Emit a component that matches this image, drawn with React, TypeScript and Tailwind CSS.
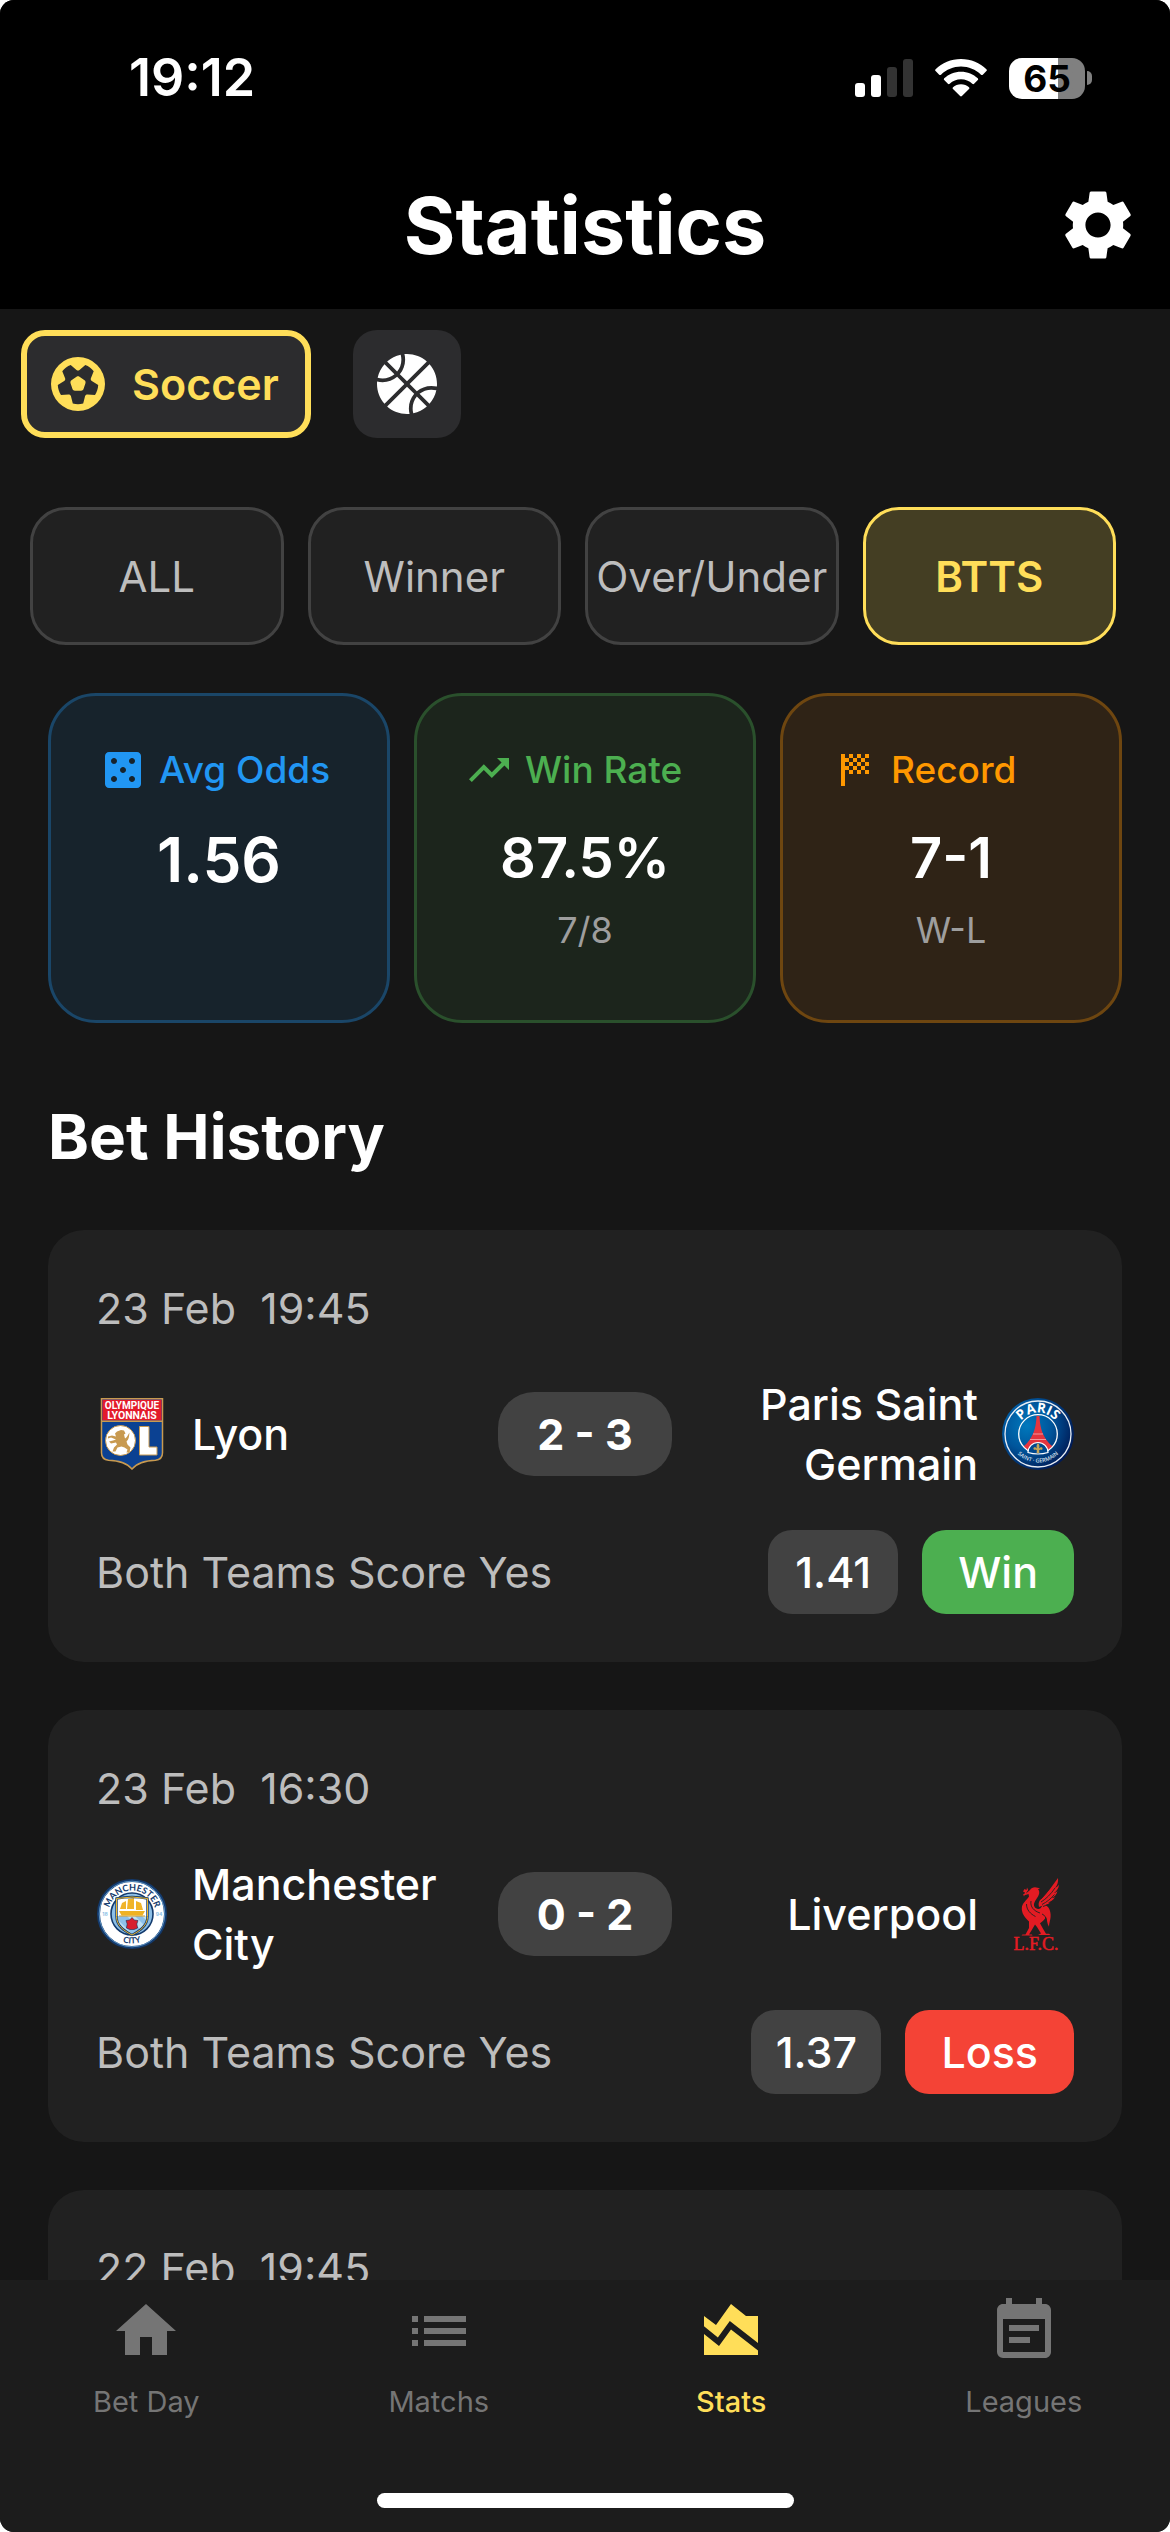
import type { ReactNode } from "react";
import {
  MdAreaChart,
  MdCasino,
  MdEventNote,
  MdHome,
  MdList,
  MdSettings,
  MdSportsScore,
  MdTrendingUp,
} from "react-icons/md";
import { FaBasketball, FaFutbol } from "react-icons/fa6";

function SignalIcon() {
  return (
    <svg viewBox="0 0 58 38" className="h-[38px] w-[58px]" aria-hidden="true">
      <rect x="0" y="24" width="10" height="14" rx="3" fill="#fff" />
      <rect x="16" y="16" width="10" height="22" rx="3" fill="#fff" />
      <rect x="32" y="8" width="10" height="30" rx="3" fill="#333" />
      <rect x="48" y="0" width="10" height="38" rx="3" fill="#333" />
    </svg>
  );
}

function WifiIcon() {
  return (
    <svg viewBox="0 0 52 38" className="h-[38px] w-[52px]" aria-hidden="true" fill="#fff">
      <path d="M26 0C36 0 45 4 51.4 10.300q.9.9 0 1.800l-3.600 3.600q-.9.8-1.800 0C40.600 10.600 33.600 7.600 26 7.600S11.400 10.600 6 15.700q-.9.800-1.800 0L.6 12.100q-.9-.9 0-1.800C7 4 16 0 26 0z" />
      <path d="M26 12.700c6.500 0 12.400 2.500 16.800 6.600q.9.900 0 1.800l-3.700 3.700q-.9.800-1.800 0C34.300 22 30.300 20.300 26 20.300S17.700 22 14.700 24.800q-.9.800-1.800 0l-3.700-3.700q-.9-.9 0-1.800C13.600 15.200 19.500 12.700 26 12.700z" />
      <path d="M26 25.200c3.100 0 5.900 1.100 8 3q1 .9 0 1.800l-7.100 7.100q-.9.900-1.800 0L18 30q-1-.9 0-1.800c2.100-1.900 4.900-3 8-3z" />
    </svg>
  );
}

function Battery() {
  return (
    <div className="flex items-center gap-[2px]" aria-label="Battery 65 percent">
      <div className="flex h-[41px] w-[76px] items-center justify-center rounded-[13px] bg-linear-to-r from-white from-65% to-[#808080] to-65% text-[37px] leading-none font-bold text-black">
        65
      </div>
      <div className="h-[14px] w-[5px] rounded-r-full bg-[#808080]" />
    </div>
  );
}

function LyonLogo() {
  return (
    <svg viewBox="0 0 72 72" className="size-[72px] shrink-0" role="img" aria-label="Lyon">
      <path d="M5.500.8h61v54c0 5-2.500 7-7 7.400C50 62.600 42 64 36 71 30 64 22 62.600 12.500 62.200c-4.500-.4-7-2.400-7-7.400z" fill="#0b4192" stroke="#c89a50" strokeWidth="1.500" />
      <rect x="6.500" y="1.800" width="59" height="20.700" fill="#e31b2b" />
      <path d="M5.500 23.300h61" stroke="#c89a50" strokeWidth="1.500" />
      <text x="36" y="11" textAnchor="middle" fontSize="10" fontWeight="700" fill="#fff" fontFamily="Roboto, sans-serif">OLYMPIQUE</text>
      <text x="36" y="20.500" textAnchor="middle" fontSize="10.500" fontWeight="700" fill="#fff" fontFamily="Roboto, sans-serif">LYONNAIS</text>
      <ellipse cx="24.500" cy="42.500" rx="15" ry="15" fill="#fff" stroke="#c89a50" strokeWidth="1" />
      <path d="M25 32l3 .5 1.500 3-1.500 1 1 4c2-1 3-4 4.500-6-.5 4-.5 7-3 9l1 3 3 3-1 5h-3l1-3-3-2-3-1-4 1-2 4h-3l1.500-4 3-3-1-2-5 1-2-2 4-1 3-1-5-2-3 1v-2l4-1 4 1-1-3 2-2z" fill="#c89a50" />
      <path d="M43.500 28.500H53V49h8v8H43.500z" fill="#fff" stroke="#c89a50" strokeWidth="1" />
    </svg>
  );
}

function ParisLogo() {
  return (
    <svg viewBox="0 0 72 72" className="size-[72px] shrink-0" role="img" aria-label="Paris Saint Germain">
      <defs>
        <radialGradient id="psg-blue" cx="35%" cy="38%" r="68%">
          <stop offset="0" stopColor="#0079bd" />
          <stop offset=".5" stopColor="#00559b" />
          <stop offset="1" stopColor="#001a55" />
        </radialGradient>
        <path id="psg-top" d="M14.500 36a21.500 21.500 0 0 1 43 0" />
        <path id="psg-bottom" d="M7.500 36a28.500 28.500 0 0 0 57 0" />
        <clipPath id="psg-inner"><circle cx="36" cy="36" r="19" /></clipPath>
      </defs>
      <circle cx="36" cy="36" r="36" fill="url(#psg-blue)" />
      <circle cx="36" cy="36" r="33" fill="none" stroke="#e8eef5" strokeWidth="1.300" />
      <g clipPath="url(#psg-inner)">
        <path d="M34.500 18h3c.3 9 2 17 7 24 2.500 3.500 5.500 6.500 8.500 8l-6 7-2-2a9 9 0 0 0-18 0l-2 2-6-7c3-1.500 6-4.500 8.500-8 5-7 6.700-15 7-24z" fill="#e5353f" />
        <path d="M31 36h10M28 41.500h16" stroke="#fff" strokeWidth=".7" opacity=".7" />
      </g>
      <circle cx="36" cy="36" r="19.300" fill="none" stroke="#fff" strokeWidth="1.300" />
      <path d="M26 54.500a10 10 0 1 1 20 0q-10 3-20 0z" fill="#00498e" stroke="#fff" strokeWidth="1.200" />
      <path d="M36 45c2 2 1.500 4 1 5.500 1.500-2 4-1.500 3.500.5-.3 1-1.500 1-2 .5l-1.500 1 .5 2-1.500 1-1.500-1 .5-2-1.500-1c-.5.5-1.700.5-2-.5-.5-2 2-2.500 3.500-.5-.5-1.500-1-3.500 1-5.500z" fill="#c5a457" />
      <text fontSize="13.500" fontWeight="700" fill="#fff" fontFamily="Open Sans, sans-serif" textAnchor="middle">
        <textPath href="#psg-top" startOffset="50%">PARIS</textPath>
      </text>
      <text fontSize="5.500" fontWeight="600" fill="#d5e0ee" fontFamily="Open Sans, sans-serif" textAnchor="middle">
        <textPath href="#psg-bottom" startOffset="50%">SAINT · GERMAIN</textPath>
      </text>
    </svg>
  );
}

function CityLogo() {
  return (
    <svg viewBox="0 0 72 72" className="size-[72px] shrink-0" role="img" aria-label="Manchester City">
      <defs>
        <path id="city-top" d="M12.500 36a23.500 23.500 0 0 1 47 0" />
        <path id="city-bottom" d="M6.500 36a29.500 29.500 0 0 0 59 0" />
        <clipPath id="city-shield"><path d="M20.500 20.500q15.500-3 31 0v18c0 9-7 14-15.500 18.500-8.500-4.500-15.500-9.500-15.500-18.500z" /></clipPath>
      </defs>
      <circle cx="36" cy="36" r="33.500" fill="#fff" stroke="#133a6d" strokeWidth="3" />
      <circle cx="36" cy="36" r="32.800" fill="none" stroke="#6fa8d8" strokeWidth=".8" />
      <circle cx="36" cy="36" r="21" fill="#8dbfe6" stroke="#133a6d" strokeWidth="1.600" />
      <g clipPath="url(#city-shield)">
        <path d="M18 16h36v22H18z" fill="#fff" />
        <path d="M18 38h36v22H18z" fill="#8ec1ea" />
        <path d="M18 38l20 20h-9L18 47zM31 38l18 18 4-4-14-14zM46 38l8 8v-8z" fill="#bfe0f5" />
        <path d="M23 33h26l-2.500 4.500h-21z" fill="#efb223" />
        <path d="M26 25l4-2v8h-6zM32 21l6-1v11h-7zM40 23l5 2 2 7h-7z" fill="#f0b429" />
        <path d="M23 38h26" stroke="#d99c1d" strokeWidth="1" />
      </g>
      <path d="M20.500 20.500q15.500-3 31 0v18c0 9-7 14-15.500 18.500-8.500-4.500-15.500-9.500-15.500-18.500z" fill="none" stroke="#133a6d" strokeWidth="2.400" />
      <path d="M20.500 20.500q15.500-3 31 0v18c0 9-7 14-15.500 18.500-8.500-4.500-15.500-9.500-15.500-18.500z" fill="none" stroke="#efb82e" strokeWidth="1" />
      <path d="M36 39.500l2.300 2.500 3.700.5-1.200 3.500.8 4-3.600 1.500H34l-3.600-1.500.8-4-1.200-3.500 3.700-.5z" fill="#d71f2f" stroke="#1b2c4f" strokeWidth=".6" />
      <text fontSize="9" fontWeight="700" fill="#133a6d" fontFamily="Lato, sans-serif" textAnchor="middle">
        <textPath href="#city-top" startOffset="50%">MANCHESTER</textPath>
      </text>
      <text fontSize="8.500" fontWeight="700" fill="#133a6d" fontFamily="Lato, sans-serif" textAnchor="middle">
        <textPath href="#city-bottom" startOffset="50%">CITY</textPath>
      </text>
      <text x="9" y="38" fontSize="5" fontWeight="700" fill="#8dbfe6" textAnchor="middle">18</text>
      <text x="63" y="38" fontSize="5" fontWeight="700" fill="#8dbfe6" textAnchor="middle">94</text>
    </svg>
  );
}

function LiverpoolLogo() {
  return (
    <svg viewBox="0 0 72 72" className="size-[72px] shrink-0 overflow-visible" role="img" aria-label="Liverpool">
      <g fill="#e31b23">
        <path d="M28 12c1.500-2.800 5-3.500 7.500-2.300l2.500.5-2 1c2 2 1.500 5-.5 8-2.500 4-4.500 6.500-3 9.500 1 2 4 3 6 1.500l3-4c3 1 6 3 6.800 8 1.200 6-1 9-1.300 14.500-2-3.500-2-7-3-10-1 3-4 5-6 6.500l3 5.500 3 5h3l1.500 1.200H36l3-1.500-4-6.500-2-2.500-3.500 6-2.500 4h3l.5 1.200H19.500l1-1.200h3l3.500-6.500v-6.500c-4-4-7.500-8-7.200-13.500.3-5 5.200-8 7.200-11.500l-.5-2.500-3 1 .5-1.500z" />
        <path d="M22.500 11l2 1 .5-2.500 1.200 2.500-1.500 2-1 3-1.700-.5 1-2-2-1zM21 16l2 .5-1 2z" />
        <path d="M37 29c-1-4 0-6 3-9l8-9 8-11c.5 3.500-.5 7-3 10 2-1 3-2 4-3.500-.2 4-2.500 6.500-5 8.500 1.500-.3 2.500-1 3.500-2-1 4-3.500 6-6 7 1.200.2 2.500-.2 3.500-.8-2 3-4.500 4.500-7 5l2.500.8c-3 2-7 2-11.500 4z" />
      </g>
      <g fill="none" stroke="#212121" strokeWidth=".9">
        <path d="M39 24c5-3 10-8 14-14M40 26.500c5-2.500 9-6 12.500-10M41 28.500c4-1.300 7-3 9.500-5.500M38.500 21.500c3-3 7-7.500 9.500-12" />
        <path d="M24.500 26c0 6 4 10 9 12.500M29 23c-1 6 3 10 9 12M40 36c3 1 4 4 4.500 7" />
      </g>
      <text x="34" y="71.500" textAnchor="middle" fontSize="18" fill="#e31b23" stroke="#e31b23" strokeWidth=".5" fontFamily="Liberation Serif, serif">L.F.C.</text>
    </svg>
  );
}

type Tone = "blue" | "green" | "orange";

const cardTone: Record<Tone, string> = {
  blue: "border-[#1a4668] bg-[#17232c]",
  green: "border-[#2a502c] bg-[#1c251c]",
  orange: "border-[#6e4610] bg-[#2f2316]",
};

const labelTone: Record<Tone, string> = {
  blue: "text-[#2196f3]",
  green: "text-[#4caf50]",
  orange: "text-[#ff9800]",
};

type StatCardProps = {
  tone: Tone;
  icon: ReactNode;
  label: string;
  value: string;
  note?: string;
};

function StatCard({ tone, icon, label, value, note }: StatCardProps) {
  return (
    <section className={`min-h-[330px] rounded-[48px] border-[3px] py-12 ${cardTone[tone]}`}>
      <h3 className={`flex h-[52px] items-center gap-3 pl-12 text-[37px] font-medium whitespace-nowrap ${labelTone[tone]}`}>
        {icon}
        {label}
      </h3>
      <p className={`mt-6 text-center font-semibold text-white ${note ? "text-[56px] leading-[76px]" : "text-[62px] leading-[80px]"}`}>
        {value}
      </p>
      {note && <p className="mt-2 text-center text-[36px] leading-[52px] text-[#9e9e9e]">{note}</p>}
    </section>
  );
}

type Match = {
  date: string;
  time: string;
  home: string;
  homeLogo: ReactNode;
  away: string;
  awayLogo: ReactNode;
  score: string;
  bet: string;
  odds: string;
  won: boolean;
};

const matches: Match[] = [
  {
    date: "23 Feb",
    time: "19:45",
    home: "Lyon",
    homeLogo: <LyonLogo />,
    away: "Paris Saint Germain",
    awayLogo: <ParisLogo />,
    score: "2 - 3",
    bet: "Both Teams Score Yes",
    odds: "1.41",
    won: true,
  },
  {
    date: "23 Feb",
    time: "16:30",
    home: "Manchester City",
    homeLogo: <CityLogo />,
    away: "Liverpool",
    awayLogo: <LiverpoolLogo />,
    score: "0 - 2",
    bet: "Both Teams Score Yes",
    odds: "1.37",
    won: false,
  },
];

function MatchDate({ date, time }: { date: string; time: string }) {
  return (
    <p className="text-[43px] leading-[60px] whitespace-pre text-[#bdbdbd]">{`${date}  ${time}`}</p>
  );
}

function MatchCard({ match }: { match: Match }) {
  return (
    <article className="flex shrink-0 flex-col gap-9 rounded-[36px] bg-[#212121] p-12">
      <MatchDate date={match.date} time={match.time} />
      <div className="flex min-h-[120px] items-center gap-6 text-[43px] leading-[60px] font-medium text-white">
        <div className="flex flex-1 items-center gap-6">
          {match.homeLogo}
          <span>{match.home}</span>
        </div>
        <span className="min-w-[174px] rounded-[36px] bg-[#424242] py-3 text-center font-bold whitespace-nowrap">{match.score}</span>
        <div className="flex flex-1 items-center justify-end gap-6 text-right">
          <span>{match.away}</span>
          {match.awayLogo}
        </div>
      </div>
      <div className="flex items-center gap-6 text-[43px] leading-[60px] font-medium text-white">
        <span className="flex-1 font-normal text-[#bdbdbd]">{match.bet}</span>
        <span className="min-w-[130px] rounded-[24px] bg-[#424242] px-6 py-3 text-center">{match.odds}</span>
        <span className={`rounded-[24px] px-9 py-3 ${match.won ? "bg-[#4caf50]" : "bg-[#f44336]"}`}>
          {match.won ? "Win" : "Loss"}
        </span>
      </div>
    </article>
  );
}

const markets = ["ALL", "Winner", "Over/Under", "BTTS"];

const navItems = [
  { label: "Bet Day", icon: MdHome, active: false },
  { label: "Matchs", icon: MdList, active: false },
  { label: "Stats", icon: MdAreaChart, active: true },
  { label: "Leagues", icon: MdEventNote, active: false },
];

export default function App() {
  return (
    <div className="h-screen bg-white font-['Inter',sans-serif]">
      <div className="flex h-full flex-col overflow-hidden rounded-[14px] bg-[#161616]">
        <header className="shrink-0 bg-black text-white">
          <div className="flex h-[156px] items-center justify-between pr-[78px] pl-[129px]">
            <time className="text-[52px] font-semibold">19:12</time>
            <div className="flex items-center gap-[22px]">
              <SignalIcon />
              <WifiIcon />
              <Battery />
            </div>
          </div>
          <div className="grid h-[153px] grid-cols-[1fr_auto_1fr] items-start px-[30px]">
            <span />
            <h1 className="text-[79px] leading-[138px] font-bold">Statistics</h1>
            <button type="button" aria-label="Settings" className="mt-[27px] justify-self-end">
              <MdSettings className="size-[84px]" />
            </button>
          </div>
        </header>

        <main className="flex min-h-0 flex-1 flex-col overflow-hidden">
          <div className="flex shrink-0 gap-[42px] px-[21px] pt-[21px]">
            <button
              type="button"
              aria-pressed="true"
              className="flex h-[108px] min-w-[290px] items-center gap-[27px] rounded-[24px] border-[6px] border-[#ffde59] bg-[#2c2c2e] px-6 text-[43px] font-semibold text-[#ffde59]"
            >
              <FaFutbol className="size-[54px]" />
              Soccer
            </button>
            <button
              type="button"
              aria-label="Basketball"
              className="flex size-[108px] items-center justify-center rounded-[24px] bg-[#2c2c2e] text-white"
            >
              <FaBasketball className="size-[60px]" />
            </button>
          </div>

          <div className="mt-[69px] grid shrink-0 grid-cols-4 gap-6 pr-[54px] pl-[30px]">
            {markets.map((market) => (
              <button
                key={market}
                type="button"
                aria-pressed={market === "BTTS"}
                className={`flex h-[138px] items-center justify-center rounded-[36px] border-[3px] text-[42px] whitespace-nowrap ${
                  market === "BTTS"
                    ? "border-[#ffde59] bg-[#443e23] font-semibold text-[#ffde59]"
                    : "border-[#424242] bg-[#212121] text-[#bdbdbd]"
                }`}
              >
                {market}
              </button>
            ))}
          </div>

          <div className="mt-12 grid shrink-0 grid-cols-3 gap-6 px-12">
            <StatCard tone="blue" icon={<MdCasino className="size-12" />} label="Avg Odds" value="1.56" />
            <StatCard tone="green" icon={<MdTrendingUp className="size-12" />} label="Win Rate" value="87.5%" note="7/8" />
            <StatCard tone="orange" icon={<MdSportsScore className="size-12" />} label="Record" value="7-1" note="W-L" />
          </div>

          <h2 className="mt-[72px] px-12 text-[62px] leading-[84px] font-bold text-white">Bet History</h2>

          <div className="mt-[51px] flex flex-col gap-12 px-12">
            {matches.map((match) => (
              <MatchCard key={match.time} match={match} />
            ))}
            <article className="shrink-0 rounded-t-[36px] bg-[#212121] p-12">
              <MatchDate date="22 Feb" time="19:45" />
            </article>
          </div>
        </main>

        <nav className="shrink-0 bg-[#1c1c1c] pb-6">
          <div className="grid grid-cols-4">
            {navItems.map(({ label, icon: Icon, active }) => (
              <a
                key={label}
                href={`#${label.toLowerCase().replace(" ", "-")}`}
                aria-current={active ? "page" : undefined}
                className={`flex flex-col items-center gap-[15px] pt-[15px] text-[29px] leading-[40px] ${
                  active ? "font-medium text-[#ffde59]" : "text-[#757575]"
                }`}
              >
                <Icon className="size-[72px]" />
                {label}
              </a>
            ))}
          </div>
          <div className="mx-auto mt-[71px] h-[15px] w-[417px] rounded-full bg-white" />
        </nav>
      </div>
    </div>
  );
}
